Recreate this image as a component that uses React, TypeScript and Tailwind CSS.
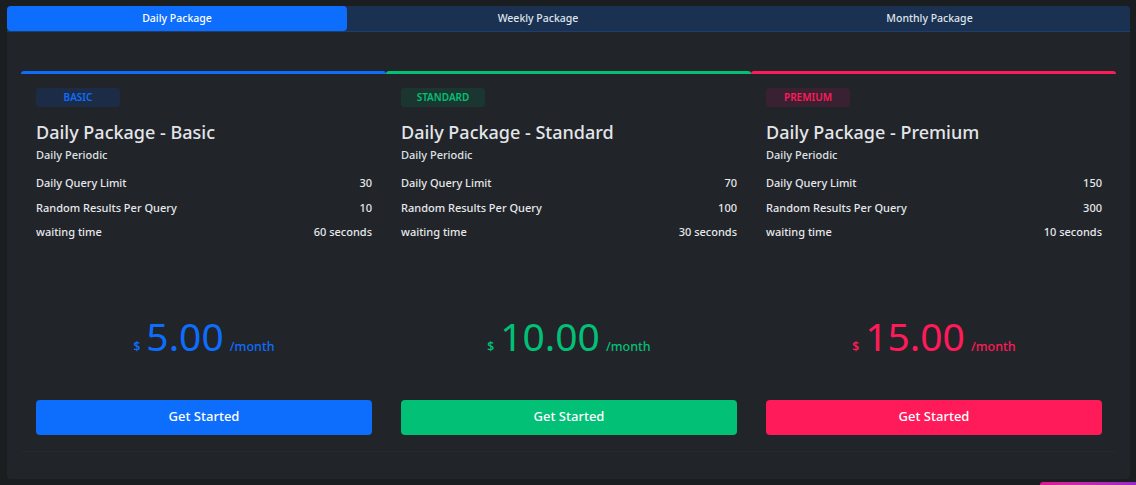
import React from "react";

type Plan = {
  badge: string;
  title: string;
  limit: string;
  results: string;
  wait: string;
  price: string;
  top: string;
  text: string;
  badgeBg: string;
  btn: string;
};

const plans: Plan[] = [
  {
    badge: "BASIC",
    title: "Daily Package - Basic",
    limit: "30",
    results: "10",
    wait: "60 seconds",
    price: "5.00",
    top: "border-t-[#0d6efd]",
    text: "text-[#0d6efd]",
    badgeBg: "bg-[#1c2c47]",
    btn: "bg-[#0d6efd]",
  },
  {
    badge: "STANDARD",
    title: "Daily Package - Standard",
    limit: "70",
    results: "100",
    wait: "30 seconds",
    price: "10.00",
    top: "border-t-[#02c076]",
    text: "text-[#02c076]",
    badgeBg: "bg-[#1b3530]",
    btn: "bg-[#02c076]",
  },
  {
    badge: "PREMIUM",
    title: "Daily Package - Premium",
    limit: "150",
    results: "300",
    wait: "10 seconds",
    price: "15.00",
    top: "border-t-[#ff1a5a]",
    text: "text-[#ff1a5a]",
    badgeBg: "bg-[#3a2131]",
    btn: "bg-[#ff1a5a]",
  },
];

function Row({ label, value }: { label: string; value: string }) {
  return (
    <div className="flex justify-between items-center h-[24.5px] text-[11px] font-medium text-[#e6e9ec]">
      <span>{label}</span>
      <span>{value}</span>
    </div>
  );
}

function Card({ p }: { p: Plan }) {
  return (
    <div
      className={`flex-1 border-t-[3px] ${p.top} rounded-t-[3px] bg-[#212429] border-b border-b-[#25282d] pl-[15px] pr-[14px] pt-[14px] pb-[16px] flex flex-col`}
    >
      <div
        className={`w-[84px] h-[19px] rounded-[3px] ${p.badgeBg} ${p.text} text-[10px] font-semibold flex items-center justify-center`}
      >
        {p.badge}
      </div>
      <div className="mt-[12px] text-[18px] leading-[26px] font-medium text-[#e3e6e9]">
        {p.title}
      </div>
      <div className="mt-[2px] text-[11px] leading-[16px] font-medium text-[#dfe2e5]">
        Daily Periodic
      </div>
      <div className="mt-[8px] flex flex-col">
        <Row label="Daily Query Limit" value={p.limit} />
        <Row label="Random Results Per Query" value={p.results} />
        <Row label="waiting time" value={p.wait} />
      </div>
      <div className={`mt-[67px] flex items-baseline justify-center ${p.text}`}>
        <span className="text-[12px] font-semibold mr-[6px]">$</span>
        <span className="text-[39px] leading-[48px] font-normal">{p.price}</span>
        <span className="text-[12.5px] font-medium ml-[6px]">/month</span>
      </div>
      <button
        className={`mt-[40px] h-[35px] w-full rounded-[4px] ${p.btn} text-white text-[13px] font-medium`}
      >
        Get Started
      </button>
    </div>
  );
}

export default function App() {
  return (
    <div
      className="w-[1136px] h-[485px] bg-[#1b1e21] relative overflow-hidden pt-[6px] pl-[7px] pr-[6px]"
      style={{ fontFamily: '"Noto Sans", "Open Sans", sans-serif' }}
    >
      <div className="h-[473px] bg-[#212429] rounded-[4px] flex flex-col">
        <div className="flex h-[26px] border-b border-[#1d3f6e] rounded-t-[4px] bg-[#1b3151] text-[10.5px] font-medium">
          <div className="w-[340px] bg-[#0d6efd] text-white rounded-[4px] flex items-center justify-center">
            Daily Package
          </div>
          <div className="w-[382px] text-[#dfe5ec] flex items-center justify-center">
            Weekly Package
          </div>
          <div className="flex-1 text-[#dfe5ec] flex items-center justify-center rounded-tr-[4px]">
            Monthly Package
          </div>
        </div>
        <div className="flex px-[14px] mt-[39px]">
          {plans.map((p) => (
            <Card key={p.badge} p={p} />
          ))}
        </div>
      </div>
      <div className="absolute right-0 bottom-0 w-[96px] h-[3px] rounded-tl-[3px] bg-gradient-to-r from-[#e0168f] to-[#9b27c9]" />
    </div>
  );
}
